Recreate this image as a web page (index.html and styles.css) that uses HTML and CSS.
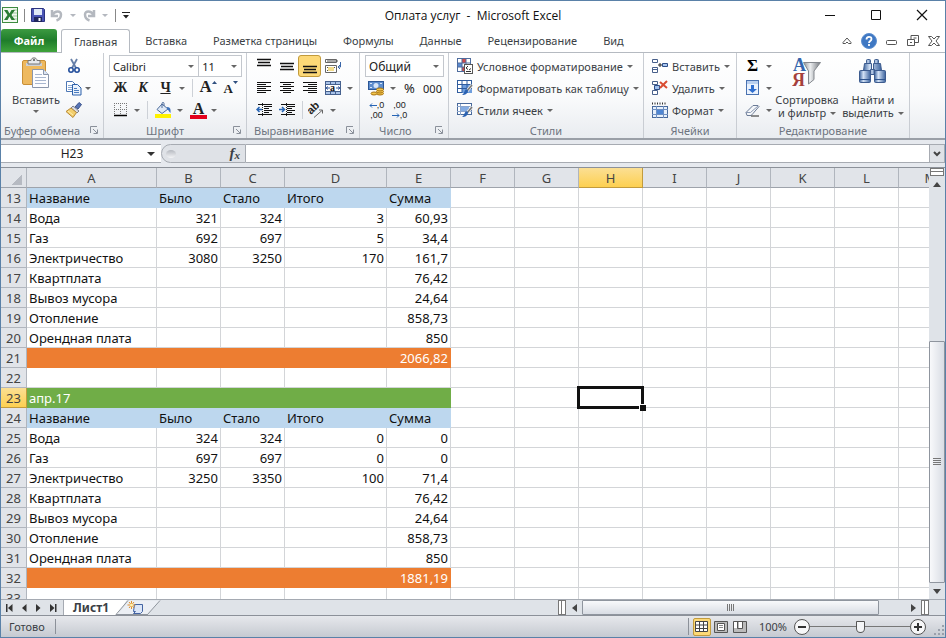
FILE: index.html
```html
<!DOCTYPE html>
<html lang="ru">
<head>
    <meta charset="UTF-8">
    <meta name="viewport" content="width=device-width, initial-scale=1.0">
    <title>Оплата услуг - Microsoft Excel</title>
    <link rel="stylesheet" href="styles.css">
</head>
<body>
<div class="window">
    <header class="titlebar">
        <div class="quick-access">
            <svg width="16" height="16" viewBox="0 0 16 16"><rect x=".5" y=".5" width="15" height="15" fill="#f2f8f0" stroke="#3d8b40"/><path d="M11 3h4M11 6h4M11 9h4M11 12h4" stroke="#9bc79a"/><path d="M2 3h3.500l2 3.500L9.500 3H13L9.500 8l3.500 5H9.500l-2-3.500L5.500 13H2l3.500-5z" fill="#2a7d34"/></svg>
            <span class="qa-line"></span>
            <button class="qa-button" aria-label="Сохранить"><svg width="14" height="14" viewBox="0 0 14 14"><path d="M.5.5h12l1 1v12H.5z" fill="#4a55b5" stroke="#2c3480"/><path d="M3 1h8v6H3z" fill="#dfe8f7"/><path d="M3 9h8v5H3z" fill="#20275e"/><path d="M7.500 10h2v3h-2z" fill="#fff"/></svg></button>
            <button class="qa-button" aria-label="Отменить"><svg width="14" height="14" viewBox="0 0 14 14"><path d="M2 2v6h6M2.500 7C5 2.500 11 2.500 11 6.500S8 12 6.500 12.500" fill="none" stroke="#b4b8bf" stroke-width="2.500"/></svg></button>
            <span class="arrow pale"></span>
            <button class="qa-button" aria-label="Вернуть"><svg width="14" height="14" viewBox="0 0 14 14"><path d="M12 2v6H6M11.500 7C9 2.500 3 2.500 3 6.500S6 12 7.500 12.500" fill="none" stroke="#b4b8bf" stroke-width="2.500"/></svg></button>
            <span class="arrow pale"></span>
            <span class="qa-line"></span>
            <button class="qa-more" aria-label="Настройка панели"><svg width="8" height="7" viewBox="0 0 8 7"><path d="M0 0h8v1H0zM1 3h6L4 6.500z" fill="#222"/></svg></button>
        </div>
        <h1 class="title">Оплата услуг&nbsp; -&nbsp; Microsoft Excel</h1>
        <div class="window-buttons">
            <button aria-label="Свернуть"><svg width="12" height="12" viewBox="0 0 12 12"><path d="M1 6.500h10" stroke="#111"/></svg></button>
            <button aria-label="Развернуть"><svg width="12" height="12" viewBox="0 0 12 12"><path d="M1.500 1.500h9v9h-9z" fill="none" stroke="#111"/></svg></button>
            <button aria-label="Закрыть"><svg width="12" height="12" viewBox="0 0 12 12"><path d="M1 1l10 10M11 1L1 11" stroke="#111" stroke-width="1.200"/></svg></button>
        </div>
    </header>

    <nav class="tabs">
        <button class="tab file">Файл</button>
        <button class="tab active">Главная</button>
        <button class="tab">Вставка</button>
        <button class="tab">Разметка страницы</button>
        <button class="tab">Формулы</button>
        <button class="tab">Данные</button>
        <button class="tab">Рецензирование</button>
        <button class="tab">Вид</button>
        <div class="tab-tools">
            <button aria-label="Свернуть ленту"><svg width="10" height="8" viewBox="0 0 10 8"><path d="M1 5.500L5 1l4 4.500v1H6.500L5 5 3.500 6.500H1z" fill="#fff" stroke="#555"/></svg></button>
            <button aria-label="Справка"><svg width="16" height="16" viewBox="0 0 16 16"><circle cx="8" cy="8" r="7.500" fill="#3f78c3" stroke="#5d8fd0"/><path d="M5.500 6.500C5.500 3 10.500 3 10.500 6c0 2-2.500 2-2.500 4M8 11v2" stroke="#fff" stroke-width="1.800" fill="none"/></svg></button>
            <button aria-label="Свернуть книгу"><svg width="12" height="12" viewBox="0 0 12 12"><rect x=".5" y="5.500" width="10" height="4" rx="1" fill="#fff" stroke="#555"/></svg></button>
            <button aria-label="Восстановить книгу"><svg width="12" height="12" viewBox="0 0 12 12"><path d="M4 4V.5h7.500v7H8" fill="none" stroke="#555"/><path d="M.500 4.500h7v6h-7z" fill="#fff" stroke="#555"/><path d="M3 7.500h2M6.500 3h3" stroke="#555"/></svg></button>
            <button aria-label="Закрыть книгу"><svg width="12" height="12" viewBox="0 0 12 12"><path d="M.5 1.500h3L6 4l2.500-2.500h3L8 6l3.500 4.500h-3L6 8l-2.500 2.500h-3L4 6z" fill="#fff" stroke="#555"/></svg></button>
        </div>
    </nav>

    <section class="ribbon">
        <div class="group clipboard">
            <div class="group-body side">
                <button class="big">
                    <svg width="28" height="32" viewBox="0 0 28 32"><rect x=".5" y="3.500" width="23" height="24" rx="1.500" fill="#eeb95f" stroke="#c98f36"/><path d="M4 6h16v3H4z" fill="#cbd0d8"/><path d="M6 7V3.500h3C9 0 15 0 15 3.500h3V7z" fill="#e8eaee" stroke="#777"/><circle cx="12" cy="3" r="1" fill="#555"/><path d="M10.500 12.500h11l5 5v13h-16z" fill="#fdfdff" stroke="#8b96ab"/><path d="M21.500 12.500v5h5" fill="#dce5f3" stroke="#8b96ab"/><path d="M13 17.500h7M13 20.500h11M13 23.500h11M13 26.500h11" stroke="#a9b7cf"/></svg>
                    <span>Вставить</span>
                    <span class="arrow"></span>
                </button>
                <div class="stack">
                    <div class="row"><button class="tool" aria-label="Вырезать"><svg width="16" height="16" viewBox="0 0 16 16"><path d="M5 1l5 9M11 1L6 10" stroke="#667fa8" stroke-width="1.800"/><circle cx="5" cy="12" r="2.200" fill="none" stroke="#244f9c" stroke-width="1.600"/><circle cx="11" cy="12" r="2.200" fill="none" stroke="#244f9c" stroke-width="1.600"/></svg></button></div>
                    <div class="row"><button class="tool" aria-label="Копировать"><svg width="16" height="16" viewBox="0 0 16 16"><path d="M.5 1.500h6l3 3v7h-9z" fill="#fff" stroke="#4d77b5"/><path d="M2 5.500h4M2 7.500h4M2 9.500h4" stroke="#86a6d2"/><path d="M6.500 4.500h5l3.500 3.500v7H6.500z" fill="#eaf2fc" stroke="#2c60aa"/><path d="M8 8.500h3M8 10.500h5M8 12.500h5" stroke="#4b7cbf"/></svg></button><span class="arrow"></span></div>
                    <div class="row"><button class="tool" aria-label="Формат по образцу"><svg width="17" height="16" viewBox="0 0 17 16"><path d="M10 5l4-4.500 2.500 2L13 7z" fill="#5775b5" stroke="#39508a"/><path d="M8 4l6 5-2 2-6-5z" fill="#d8dbe3" stroke="#7c8190"/><path d="M6 6l5.500 4.500-3.500 5L1 9.500z" fill="#f3cf6e" stroke="#b98a35"/><path d="M3 9l5 4" stroke="#fff0b0"/></svg></button></div>
                </div>
            </div>
            <div class="group-label">Буфер обмена<button class="launcher" aria-label="Параметры буфера"><svg width="8" height="8" viewBox="0 0 8 8"><path d="M.5 7V.5H7M3 3l4 4M7.500 3.500v4h-4" fill="none" stroke="#8a909a"/></svg></button></div>
        </div>

        <div class="group font">
            <div class="group-body">
                <div class="row">
                    <span class="pick family"><select aria-label="Шрифт"><option>Calibri</option></select><span class="arrow"></span></span>
                    <span class="pick size"><select aria-label="Размер"><option>11</option></select><span class="arrow"></span></span>
                </div>
                <div class="row">
                    <button class="tool letter">Ж</button>
                    <button class="tool letter italic">К</button>
                    <button class="tool letter under">Ч</button>
                    <span class="arrow"></span>
                    <span class="divider"></span>
                    <button class="tool letter grow">A<svg width="5" height="3" viewBox="0 0 5 3"><path d="M0 3L2.500 0 5 3z" fill="#2f4f7f"/></svg></button>
                    <button class="tool letter shrink">A<svg width="5" height="3" viewBox="0 0 5 3"><path d="M0 0h5L2.500 3z" fill="#2f4f7f"/></svg></button>
                </div>
                <div class="row">
                    <button class="tool" aria-label="Границы"><svg width="14" height="14" viewBox="0 0 14 14"><path d="M.5 0v12M6.500 0v12M12.500 0v12M0 .5h13M0 6.500h13" stroke="#777" stroke-dasharray="1 1"/><path d="M0 12.500h13" stroke="#000" stroke-width="1.500"/></svg></button>
                    <span class="arrow"></span>
                    <span class="divider"></span>
                    <button class="tool" aria-label="Цвет заливки"><svg width="17" height="16" viewBox="0 0 17 16"><path d="M0 12h16v4H0z" fill="#fff200"/><path d="M7 2l6 5-6 4.500-5-4z" fill="#dfe9f6" stroke="#4d6c9b"/><path d="M7 6V1.500c0-1.500 2-1.500 2 0V4" fill="none" stroke="#4d6c9b"/><path d="M12 5c3 0 4 2 3.500 6-1.500-1-2-3-3-3.500z" fill="#3d73bd"/></svg></button>
                    <span class="arrow"></span>
                    <button class="tool letter color">A</button>
                    <span class="arrow"></span>
                </div>
            </div>
            <div class="group-label">Шрифт<button class="launcher" aria-label="Параметры шрифта"><svg width="8" height="8" viewBox="0 0 8 8"><path d="M.5 7V.5H7M3 3l4 4M7.500 3.500v4h-4" fill="none" stroke="#8a909a"/></svg></button></div>
        </div>

        <div class="group align">
            <div class="group-body">
                <div class="row">
                    <button class="tool" aria-label="По верхнему краю"><svg width="14" height="16" viewBox="0 0 14 16"><path d="M0 1.500h14M1 4.500h12M0 7.500h14" stroke="#111" stroke-width="1.300"/></svg></button>
                    <button class="tool" aria-label="По середине"><svg width="14" height="16" viewBox="0 0 14 16"><path d="M0 5.500h14M1 8.500h12M0 11.500h14" stroke="#111" stroke-width="1.300"/></svg></button>
                    <button class="tool pressed" aria-label="По нижнему краю"><svg width="14" height="16" viewBox="0 0 14 16"><path d="M0 8.500h14M1 11.500h12M0 14.500h14" stroke="#111" stroke-width="1.300"/></svg></button>
                    <button class="tool wide" aria-label="Перенос текста"><svg width="17" height="16" viewBox="0 0 17 16"><path d="M.5 1.500h11v3H.5zM.5 7.500h11v7H.5z" fill="#fff" stroke="#666"/><path d="M2 3h11M2 9.500h8M2 12.500h6" stroke="#555"/><path d="M3 9h6v4H3z" fill="#f4dd8c"/><path d="M15.500 4v5H13m2-2l-2 2 2 2" fill="none" stroke="#3a66a8"/></svg></button>
                </div>
                <div class="row">
                    <button class="tool" aria-label="По левому краю"><svg width="14" height="12" viewBox="0 0 14 12"><path d="M0 .5h14M0 2.500h9M0 4.500h14M0 6.500h9M0 8.500h14M0 10.500h9" stroke="#111"/></svg></button>
                    <button class="tool" aria-label="По центру"><svg width="14" height="12" viewBox="0 0 14 12"><path d="M0 .5h14M3 2.500h8M0 4.500h14M3 6.500h8M0 8.500h14M3 10.500h8" stroke="#111"/></svg></button>
                    <button class="tool" aria-label="По правому краю"><svg width="14" height="12" viewBox="0 0 14 12"><path d="M0 .5h14M5 2.500h9M0 4.500h14M5 6.500h9M0 8.500h14M5 10.500h9" stroke="#111"/></svg></button>
                    <button class="tool wide" aria-label="Объединить"><svg width="16" height="14" viewBox="0 0 16 14"><rect x=".5" y=".5" width="15" height="13" fill="#a9c3e8" stroke="#46618e"/><path d="M5.500 0v4M10.500 0v4M5.500 10v4M10.500 10v4M0 3.500h16M0 10.500h16" stroke="#46618e"/><path d="M1 4h14v6H1z" fill="#fff"/><path d="M1 7h4m6 0h4M3 5.500L1 7l2 1.500M13 5.500L15 7l-2 1.500" stroke="#345899" fill="none"/><text x="5" y="9.500" font-family="Liberation Serif" font-size="10" font-weight="700" fill="#111">a</text></svg></button>
                    <span class="arrow"></span>
                </div>
                <div class="row">
                    <button class="tool" aria-label="Уменьшить отступ"><svg width="16" height="14" viewBox="0 0 16 14"><path d="M2 1.500h14M8 3.500h8M8 5.500h5M8 7.500h8M8 9.500h5M2 11.500h14" stroke="#111"/><path d="M6.500 0v14" stroke="#222" stroke-dasharray="1 1"/><path d="M6 6.500H1m2.500-2.500L1 6.500 3.500 9" stroke="#2765b5" stroke-width="1.500" fill="none"/></svg></button>
                    <button class="tool" aria-label="Увеличить отступ"><svg width="16" height="14" viewBox="0 0 16 14"><path d="M2 1.500h14M8 3.500h8M8 5.500h5M8 7.500h8M8 9.500h5M2 11.500h14" stroke="#111"/><path d="M7.500 0v14" stroke="#222" stroke-dasharray="1 1"/><path d="M0 6.500h5M3 4l2.500 2.500L3 9" stroke="#2765b5" stroke-width="1.500" fill="none"/></svg></button>
                    <span class="divider"></span>
                    <button class="tool" aria-label="Ориентация"><svg width="17" height="16" viewBox="0 0 17 16"><text x="3" y="13" transform="rotate(-45 3 13)" font-family="Liberation Sans" font-size="11" font-weight="700" fill="#222">ab</text><path d="M6 15.500l8-7M11 8h3.500v3.500" stroke="#666" fill="none"/></svg></button>
                    <span class="arrow"></span>
                </div>
            </div>
            <div class="group-label">Выравнивание<button class="launcher" aria-label="Параметры выравнивания"><svg width="8" height="8" viewBox="0 0 8 8"><path d="M.5 7V.5H7M3 3l4 4M7.500 3.500v4h-4" fill="none" stroke="#8a909a"/></svg></button></div>
        </div>

        <div class="group number">
            <div class="group-body">
                <div class="row">
                    <span class="pick format"><select aria-label="Числовой формат"><option>Общий</option></select><span class="arrow"></span></span>
                </div>
                <div class="row">
                    <button class="tool" aria-label="Финансовый формат"><svg width="17" height="16" viewBox="0 0 17 16"><rect x=".5" y="1.500" width="15" height="8" fill="#5d8dcd" stroke="#2c5796"/><circle cx="8" cy="5.500" r="2.500" fill="#d7e6f8"/><path d="M2 3.500h2M12 3.500h2M2 7.500h2" stroke="#d7e6f8"/><g fill="#f3c64c" stroke="#a87412"><ellipse cx="12" cy="13.500" rx="3.500" ry="1.500"/><ellipse cx="12" cy="11.500" rx="3.500" ry="1.500"/><ellipse cx="12" cy="9.500" rx="3.500" ry="1.500"/><ellipse cx="6" cy="13.500" rx="3" ry="1.500"/></g></svg></button>
                    <span class="arrow"></span>
                    <button class="tool text">%</button>
                    <button class="tool text thousands">000</button>
                </div>
                <div class="row">
                    <button class="tool digits" aria-label="Увеличить разрядность"><span><svg width="8" height="5" viewBox="0 0 8 5"><path d="M8 2.500H1M3 .5l-2 2 2 2" stroke="#2765b5" fill="none"/></svg>,0</span><span>,00</span></button>
                    <button class="tool digits" aria-label="Уменьшить разрядность"><span>,00</span><span><svg width="8" height="5" viewBox="0 0 8 5"><path d="M0 2.500h7M5 .5l2 2-2 2" stroke="#2765b5" fill="none"/></svg>,0</span></button>
                </div>
            </div>
            <div class="group-label">Число<button class="launcher" aria-label="Параметры числа"><svg width="8" height="8" viewBox="0 0 8 8"><path d="M.5 7V.5H7M3 3l4 4M7.500 3.500v4h-4" fill="none" stroke="#8a909a"/></svg></button></div>
        </div>

        <div class="group styles">
            <div class="group-body">
                <div class="row"><button class="command"><svg width="16" height="16" viewBox="0 0 16 16"><rect x=".5" y=".5" width="13" height="13" fill="#fff" stroke="#4f6d9e"/><path d="M5 1h4v4H5z" fill="#cf4a4a"/><path d="M1 5h4v4H1z" fill="#5b8ad0"/><path d="M5 9h3v4H5z" fill="#cf4a4a"/><path d="M5 0v14M9 0v8M0 5h14M0 9h8" stroke="#4f6d9e"/><rect x="7.500" y="6.500" width="8" height="9" fill="#fff" stroke="#555"/><path d="M11 8L9 10l2 1.500M12 12l2-1.500M9 13.500h5" stroke="#333" fill="none"/></svg>Условное форматирование<span class="arrow"></span></button></div>
                <div class="row"><button class="command"><svg width="16" height="16" viewBox="0 0 16 16"><rect x=".5" y=".5" width="14" height="12" fill="#fff" stroke="#2f5c9e"/><path d="M5 4h10v9H5z" fill="#6f9edd"/><path d="M5 0v13M10 0v13M0 4.500h15M0 8.500h15" stroke="#2f5c9e"/><path d="M15 5l-5 6" stroke="#eee" stroke-width="3"/><path d="M15 5l-5 6" stroke="#777" stroke-width="1.500"/><path d="M11 10c0 4-3 5-6 5 2-1 2-4 4-6z" fill="#2a62b2"/></svg>Форматировать как таблицу<span class="arrow"></span></button></div>
                <div class="row"><button class="command"><svg width="16" height="16" viewBox="0 0 16 16"><rect x=".5" y="1.500" width="14" height="11" fill="#fff" stroke="#48699b"/><path d="M3 5h9v4H3z" fill="#83abe2"/><path d="M0 4.500h15M0 9.500h15M3.500 2v11" stroke="#8ba5cc"/><path d="M15 5l-5 6" stroke="#eee" stroke-width="3"/><path d="M15 5l-5 6" stroke="#777" stroke-width="1.500"/><path d="M11 10c0 4-3 5-6 5 2-1 2-4 4-6z" fill="#2a62b2"/></svg>Стили ячеек<span class="arrow"></span></button></div>
            </div>
            <div class="group-label">Стили</div>
        </div>

        <div class="group cells">
            <div class="group-body">
                <div class="row"><button class="command"><svg width="16" height="16" viewBox="0 0 16 16"><path d="M.5 1.500h5v3h-5zM.5 9.500h5v5h-5zM.5 11.500h5" fill="#fff" stroke="#48608b"/><path d="M10.500 5.500h5v3h-5z" fill="#a9c6ee" stroke="#2c4d88"/><path d="M6 7h4M8 5v4" stroke="#222"/></svg>Вставить<span class="arrow"></span></button></div>
                <div class="row"><button class="command"><svg width="16" height="16" viewBox="0 0 16 16"><path d="M.5 1.500h5v3h-5zM.5 10.500h5v4h-5z" fill="#fff" stroke="#48608b"/><path d="M2.500 5.500h5v4h-5z" fill="#9dbfec" stroke="#2c4d88"/><path d="M8 2l7 6M15 1L8 8" stroke="#d94c32" stroke-width="2"/></svg>Удалить<span class="arrow"></span></button></div>
                <div class="row"><button class="command"><svg width="16" height="16" viewBox="0 0 16 16"><path d="M0 1.500h15" stroke="#333" stroke-dasharray="1 1.500" stroke-width="2"/><rect x=".5" y="4.500" width="15" height="11" fill="#e7f0fb" stroke="#48699b"/><path d="M4.500 4v12M11.500 4v12M0 7.500h16M0 12.500h16" stroke="#6d8fc2"/><path d="M5 8h6v4H5z" fill="#4f86d3"/></svg>Формат<span class="arrow"></span></button></div>
            </div>
            <div class="group-label">Ячейки</div>
        </div>

        <div class="group editing">
            <div class="group-body side">
                <div class="stack">
                    <div class="row"><button class="tool sigma">Σ</button><span class="arrow"></span></div>
                    <div class="row"><button class="tool" aria-label="Заполнить"><svg width="14" height="16" viewBox="0 0 14 16"><rect x=".5" y=".5" width="12" height="14" fill="#eaf2fd" stroke="#4a72b0"/><path d="M1 1h11v3H1z" fill="#b9d0f0"/><path d="M5 5h3v4h3l-4.500 4L2 9h3z" fill="#2f6fd0"/></svg></button><span class="arrow"></span></div>
                    <div class="row"><button class="tool" aria-label="Очистить"><svg width="15" height="13" viewBox="0 0 15 13"><path d="M8 1.500h5l1 1L8 9.500 6 11.500H2L1 8.500z" fill="#f5f7fa" stroke="#6a7a96"/><path d="M1 8.500h4.500L13 2" fill="none" stroke="#8a98b2"/><path d="M6 12h8" stroke="#222"/></svg></button><span class="arrow"></span></div>
                </div>
                <button class="big">
                    <svg width="30" height="32" viewBox="0 0 30 32">
                        <defs><linearGradient id="steel"><stop offset="0" stop-color="#8d9196"/><stop offset=".4" stop-color="#eceef0"/><stop offset="1" stop-color="#74787e"/></linearGradient></defs>
                        <text x="1" y="14" font-family="Liberation Serif" font-size="18" font-weight="700" fill="#3565ad">А</text>
                        <text x="0" y="29" font-family="Liberation Serif" font-size="18" font-weight="700" fill="#a5403c">Я</text>
                        <path d="M11.500 5.500h17L22 14v8.500L16.500 27V14z" fill="url(#steel)" stroke="#84888e"/>
                    </svg>
                    <span>Сортировка</span>
                    <span>и фильтр<span class="arrow"></span></span>
                </button>
                <button class="big">
                    <svg width="30" height="32" viewBox="0 0 30 32">
                        <defs><linearGradient id="lens"><stop offset="0" stop-color="#3f669f"/><stop offset=".35" stop-color="#d3e2f6"/><stop offset="1" stop-color="#3b629d"/></linearGradient></defs>
                        <g fill="url(#lens)" stroke="#3d5c8f">
                            <rect x="8.500" y="2.500" width="4" height="4" rx="1"/>
                            <rect x="16.500" y="2.500" width="4" height="4" rx="1"/>
                            <path d="M6.500 6.500h7v7h-8zM15.500 6.500h7l1 7h-8z"/>
                            <path d="M12.500 12.500h4v5h-4z"/>
                            <rect x="1.500" y="13.500" width="11" height="12" rx="1"/>
                            <rect x="16.500" y="13.500" width="11" height="12" rx="1"/>
                        </g>
                        <path d="M2 22.500h10M17 22.500h10" stroke="#2f558f"/>
                    </svg>
                    <span>Найти и</span>
                    <span>выделить<span class="arrow"></span></span>
                </button>
            </div>
            <div class="group-label">Редактирование</div>
        </div>
    </section>

    <section class="formula-bar">
        <div class="name-box"><input type="text" value="H23" aria-label="Имя ячейки"><span class="arrow dark"></span></div>
        <div class="fx"><span class="fx-dot"></span><button>f<sub>x</sub></button></div>
        <input class="formula" type="text" aria-label="Строка формул">
        <button class="expand" aria-label="Развернуть"><svg width="8" height="6" viewBox="0 0 8 6"><path d="M1 1l3 3 3-3" fill="none" stroke="#444" stroke-width="2"/></svg></button>
    </section>

    <main class="workspace">
        <div class="sheet">
            <table class="cells-table">
                <colgroup>
                    <col class="col-head"><col class="col-a"><col class="col-std"><col class="col-std"><col class="col-d">
                    <col class="col-std"><col class="col-std"><col class="col-std"><col class="col-std"><col class="col-std">
                    <col class="col-std"><col class="col-std"><col class="col-std"><col class="col-std">
                </colgroup>
                <thead><tr id="letters"></tr></thead>
                <tbody id="rows"></tbody>
            </table>
        </div>
        <div class="vscroll">
            <span class="split-h"></span>
            <button class="scroll-button" aria-label="Вверх"><span class="tri up"></span></button>
            <div class="vtrack"><div class="vthumb"><span class="grip"></span></div></div>
            <button class="scroll-button" aria-label="Вниз"><span class="tri down"></span></button>
        </div>
    </main>

    <div class="sheet-bar">
        <div class="sheet-nav">
            <button aria-label="Первый лист"><svg width="7" height="8" viewBox="0 0 7 8"><path d="M0 0h1.500v8H0zM6.500 0v8L2 4z" fill="#333"/></svg></button>
            <button aria-label="Предыдущий лист"><svg width="5" height="8" viewBox="0 0 5 8"><path d="M4.500 0v8L0 4z" fill="#333"/></svg></button>
            <button aria-label="Следующий лист"><svg width="5" height="8" viewBox="0 0 5 8"><path d="M0 0v8l4.500-4z" fill="#333"/></svg></button>
            <button aria-label="Последний лист"><svg width="7" height="8" viewBox="0 0 7 8"><path d="M5 0h1.500v8H5zM0 0v8l4.500-4z" fill="#333"/></svg></button>
        </div>
        <button class="sheet-tab">Лист1</button>
        <button class="new-sheet" aria-label="Вставить лист"><svg width="48" height="16" viewBox="0 0 48 16"><path d="M0 0h12L2 14.500H0z" fill="#fff"/><path d="M.5 14.500h2L14 .5h31L32.500 14.500z" fill="#eceff4"/><path d="M1 14.500L13 .5M32.500 14.500L45 .5M1 14.500h32" fill="none" stroke="#8f959d"/><path d="M19.500 4.500h8v7l-2 2h-7l2-2h-2z" fill="#dce6f7" stroke="#4464a3"/><path d="M16.500 1v8M12.500 5h8M14 2l5 6M19 2l-5 6" stroke="#e0902a"/><circle cx="16.500" cy="5" r="1.500" fill="#fff3b0"/></svg></button>
        <span class="bar-space"></span>
        <div class="hscroll">
            <span class="split-v"></span>
            <button class="scroll-button" aria-label="Влево"><span class="tri left"></span></button>
            <div class="htrack"><div class="hthumb"><span class="grip"></span></div></div>
            <button class="scroll-button" aria-label="Вправо"><span class="tri right"></span></button>
            <span class="split-v"></span>
        </div>
    </div>

    <footer class="status">
        <span class="ready">Готово</span>
        <div class="views">
            <button class="view on" aria-label="Обычный"><svg width="14" height="12" viewBox="0 0 14 12"><path d="M.5.5h12v10H.5zM4.500 0v11M8.500 0v11M0 4h13M0 7.500h13" fill="#fff" stroke="#444"/></svg></button>
            <button class="view" aria-label="Разметка страницы"><svg width="14" height="12" viewBox="0 0 14 12"><path d="M.5.5h13v11H.5z" fill="#bbb" stroke="#555"/><path d="M3.500 2.500h7v7h-7z" fill="#fff" stroke="#555"/><path d="M5 4.500h4M5 6.500h4" stroke="#888"/></svg></button>
            <button class="view" aria-label="Страничный режим"><svg width="14" height="12" viewBox="0 0 14 12"><path d="M.5.5h13v11H.5z" fill="#bbb" stroke="#555"/><path d="M1 1h3v6H1zM6 1h3v6H6z" fill="#fff"/><path d="M4.500 0v7.500H9.500V0" fill="none" stroke="#555"/></svg></button>
        </div>
        <label class="percent" for="zoom">100%</label>
        <div class="zoom">
            <button class="round" aria-label="Уменьшить"><svg width="16" height="16" viewBox="0 0 16 16"><circle cx="8" cy="8" r="7.500" fill="#f7f7f8" stroke="#555"/><path d="M4 8h8" stroke="#333" stroke-width="2"/></svg></button>
            <input id="zoom" type="range" min="0" max="100" value="50">
            <button class="round" aria-label="Увеличить"><svg width="16" height="16" viewBox="0 0 16 16"><circle cx="8" cy="8" r="7.500" fill="#f7f7f8" stroke="#555"/><path d="M4 8h8M8 4v8" stroke="#333" stroke-width="2"/></svg></button>
        </div>
        <svg class="size-grip" width="12" height="12" viewBox="0 0 12 12"><path d="M9 1h2v2H9zM9 5h2v2H9zM5 5h2v2H5zM9 9h2v2H9zM5 9h2v2H5zM1 9h2v2H1z" fill="#9aa0ab"/></svg>
    </footer>
</div>
<script src="script.js"></script>
</body>
</html>
```
FILE: styles.css
```css
* {
    box-sizing: border-box;
}
body {
    margin: 0;
    font-family: "Noto Sans", "Open Sans", sans-serif;
    font-size: 11px;
    color: #3b3f45;
}
button, input, select {
    font: inherit;
    color: inherit;
    margin: 0;
    padding: 0;
    border: 0;
    background: none;
    border-radius: 0;
}
svg {
    display: block;
    flex: none;
}
.window {
    display: flex;
    flex-direction: column;
    height: 100vh;
    border: 1px solid #5a81a8;
    background: #fff;
    overflow: hidden;
}

/* small drop-down triangle */
.arrow {
    display: inline-block;
    flex: none;
    border: 3px solid transparent;
    border-top-color: #666;
    border-bottom: 0;
}
.arrow.pale {
    border-top-color: #b4b8bf;
}
.arrow.dark {
    border-width: 4px;
    border-bottom: 0;
    border-top-color: #333;
}

/* title bar */
.titlebar {
    display: grid;
    grid-template-columns: 1fr auto 1fr;
    align-items: center;
    height: 28px;
    flex: none;
}
.quick-access {
    display: flex;
    align-items: center;
    gap: 5px;
    padding-left: 1px;
}
.qa-line {
    width: 1px;
    height: 13px;
    margin: 0 1px;
    background: #888;
}
.qa-button + .arrow {
    margin: 0 1px;
}
.title {
    margin: 0;
    font-family: "Open Sans", "Noto Sans", sans-serif;
    font-size: 12px;
    font-weight: 400;
    color: #111;
}
.window-buttons {
    display: flex;
    justify-content: flex-end;
}
.window-buttons button {
    display: flex;
    align-items: center;
    justify-content: center;
    width: 46px;
    height: 28px;
}

/* tabs */
.tabs {
    display: flex;
    align-items: stretch;
    height: 24px;
    flex: none;
    border-bottom: 1px solid #b5bac1;
}
.tab {
    padding: 0 13px;
    line-height: 23px;
}
.tab.file {
    width: 56px;
    padding: 0;
    margin-right: 4px;
    border-radius: 3px 3px 0 0;
    background: linear-gradient(#3c9a41, #1f7d2b 50%, #3fa33b);
    color: #fff;
    font-weight: 700;
}
.tab.active {
    height: 24px;
    padding: 0 12px;
    margin-right: 2px;
    border: 1px solid #b5bac1;
    border-bottom: 0;
    border-radius: 3px 3px 0 0;
    background: #fff;
}
.tab-tools {
    display: flex;
    align-items: center;
    gap: 9px;
    margin-left: auto;
    padding-right: 5px;
}

/* ribbon */
.ribbon {
    display: flex;
    flex: none;
    height: 87px;
    background: linear-gradient(#fff, #fafbfc 50%, #e9ecf0);
    border-bottom: 2px solid #9a9fa7;
}
.group {
    display: flex;
    flex-direction: column;
    flex: none;
    border-right: 1px solid #c9cdd3;
}
.group-body {
    flex: 1;
    padding: 2px 4px 0 5px;
}
.group-body.side {
    display: flex;
}
.group-label {
    display: flex;
    align-items: center;
    justify-content: center;
    height: 16px;
    color: #6d747f;
}
.launcher {
    margin-left: auto;
    padding-right: 5px;
}
.clipboard { width: 103px; }
.font { width: 143px; }
.align { width: 113px; }
.number { width: 89px; }
.styles { width: 195px; }
.cells { width: 93px; }
.editing { width: 173px; }
.clipboard .group-label {
    padding-left: 3px;
}
.font .group-label {
    padding-left: 42px;
}
.align .group-label {
    padding-left: 7px;
}
.number .group-label {
    padding-left: 19px;
}
.row {
    display: flex;
    align-items: center;
    height: 22px;
}
.row > .arrow {
    margin: 0 2px;
}
.tool {
    display: flex;
    align-items: center;
    justify-content: center;
    width: 23px;
    height: 22px;
    color: #222;
}
.tool.wide {
    width: 24px;
}
.tool.pressed {
    border: 1px solid #c29b3c;
    border-radius: 3px;
    background: #fdd977;
}
.letter {
    font-family: "Liberation Serif", serif;
    font-size: 14px;
    font-weight: 700;
}
.letter.italic {
    font-style: italic;
}
.letter.under {
    text-decoration: underline;
}
.letter.grow, .letter.shrink {
    align-items: flex-start;
}
.letter.grow {
    font-size: 17px;
}
.letter.shrink {
    font-size: 13px;
    line-height: 24px;
}
.letter.grow svg, .letter.shrink svg {
    margin-top: 4px;
}
.letter.color {
    width: 17px;
    height: 17px;
    margin-left: 5px;
    margin-right: 2px;
    border-bottom: 4px solid #e3001b;
    font-size: 16px;
    line-height: 13px;
}
.divider {
    width: 1px;
    height: 18px;
    margin: 0 4px 0 5px;
    background: #cdd1d7;
}
.align .divider {
    margin: 0 2px 0 4px;
}
.pick {
    position: relative;
    display: flex;
    height: 22px;
    border: 1px solid #c3c7cd;
    background: #fff;
}
.pick select {
    appearance: none;
    width: 100%;
    padding-left: 3px;
    color: #222;
}
.pick .arrow {
    position: absolute;
    right: 4px;
    top: 9px;
    pointer-events: none;
}
.pick.family {
    width: 91px;
}
.pick.size {
    width: 43px;
    border-left: 0;
}
.pick.format {
    width: 80px;
}
.pick.format select {
    font-size: 12px;
}
.text {
    font-size: 13px;
}
.text.thousands {
    font-size: 11px;
}
.digits {
    flex-direction: column;
    font-family: "Liberation Sans", sans-serif;
    font-size: 9px;
    line-height: 10px;
}
.digits span {
    display: flex;
    align-items: center;
}
.sigma {
    font-family: "Liberation Serif", serif;
    font-size: 17px;
    font-weight: 700;
    color: #000;
}
.command {
    display: flex;
    align-items: center;
    gap: 4px;
    height: 22px;
    padding-left: 3px;
    white-space: nowrap;
}
.big {
    display: flex;
    flex-direction: column;
    align-items: center;
    min-width: 66px;
    padding-top: 2px;
    line-height: 13px;
    white-space: nowrap;
}
.big svg {
    height: 32px;
    margin-bottom: 4px;
}
.big .arrow {
    margin: 0 0 2px 4px;
}
.big > .arrow {
    margin: 4px 0 0;
}
.clipboard .big {
    min-width: 56px;
}
.clipboard .group-body {
    padding-left: 7px;
}
.clipboard .tool {
    width: 19px;
}
.editing .group-body {
    padding-left: 4px;
    padding-right: 0;
}

/* formula bar */
.formula-bar {
    display: flex;
    flex: none;
    height: 28px;
    padding: 4px 0 4px;
    background: #e6e9ee;
    border-bottom: 1px solid #8c9199;
}
.name-box {
    display: flex;
    align-items: center;
    width: 160px;
    padding-right: 6px;
    background: #fff;
    border-top: 1px solid #a7abb2;
    border-bottom: 1px solid #a7abb2;
    font-size: 12px;
    color: #222;
}
.name-box input {
    flex: 1;
    min-width: 0;
    padding-right: 4px;
    text-align: center;
}
.fx {
    display: flex;
    align-items: center;
    justify-content: space-between;
    width: 85px;
    padding: 0 5px 0 4px;
    border: 1px solid #a7abb2;
    border-radius: 10px 0 0 10px;
    background: #dfe2e7;
}
.fx-dot {
    width: 10px;
    height: 8px;
    border-radius: 50%;
    background: linear-gradient(#b5b9c0, #f4f5f7);
}
.fx button {
    font-family: "Liberation Serif", serif;
    font-size: 15px;
    font-style: italic;
    font-weight: 700;
    line-height: 16px;
}
.fx sub {
    font-size: 11px;
    vertical-align: -1px;
}
.formula {
    flex: 1;
    min-width: 0;
    background: #fff;
    border-top: 1px solid #a7abb2;
    border-bottom: 1px solid #a7abb2;
}
.expand {
    display: flex;
    align-items: center;
    justify-content: center;
    width: 16px;
    border: 1px solid #a7abb2;
    background: #dfe2e7;
}

/* sheet */
.workspace {
    display: flex;
    flex: 1;
    min-height: 0;
}
.sheet {
    flex: 1;
    min-width: 0;
    overflow: hidden;
}
.cells-table {
    table-layout: fixed;
    width: 0;
    border-collapse: separate;
    border-spacing: 0;
    font-size: 13px;
    color: #111;
}
.col-head { width: 26px; }
.col-a { width: 130px; }
.col-d { width: 102px; }
.col-std { width: 64px; }
.cells-table th, .cells-table td {
    height: 20px;
    padding: 1px 2px 0;
    border-right: 1px solid #d3d5d8;
    border-bottom: 1px solid #d3d5d8;
    line-height: 18px;
    white-space: nowrap;
}
.cells-table th {
    padding: 1px 0 0;
    background: #e1e4e9;
    border-color: #b0b5bd;
    font-weight: 400;
    color: #444;
}
.cells-table thead th {
    border-bottom-color: #9ea3ab;
}
.cells-table .current {
    background: linear-gradient(#fbdf93, #fdd051);
    border-color: #c29b3c;
}
.corner::after {
    content: "";
    display: block;
    width: 11px;
    height: 11px;
    margin: 2px 0 0 10px;
    background: linear-gradient(135deg, transparent 50%, #b6bac2 50%);
}
.cells-table td.num {
    text-align: right;
}
.cells-table .head td.filled {
    background: #bdd7ee;
    border-color: #bdd7ee;
}
.cells-table .total td.filled {
    background: #ed7d31;
    border-color: #ed7d31;
    color: #fff;
}
.cells-table .month td.filled {
    background: #70ad47;
    border-color: #70ad47;
    color: #fff;
}
.cells-table td.selected {
    position: relative;
}
.selected::before {
    content: "";
    position: absolute;
    inset: -2px;
    border: 3px solid #111;
}
.selected::after {
    content: "";
    position: absolute;
    right: -4px;
    bottom: -4px;
    width: 6px;
    height: 6px;
    background: #111;
    border: solid #fff;
    border-width: 1px 0 0 1px;
}

/* scroll bars */
.vscroll {
    display: flex;
    flex-direction: column;
    width: 16px;
    background: #dfe3e8;
}
.split-h {
    height: 8px;
    flex: none;
    margin: 0 1px;
    border: 1px solid #777;
    background: linear-gradient(#fff 2px, #777 2px, #777 3px, #fff 3px);
}
.scroll-button {
    display: flex;
    align-items: center;
    justify-content: center;
    width: 16px;
    height: 16px;
    flex: none;
}
.tri {
    border: 4px solid transparent;
}
.tri.up {
    border-top: 0;
    border-bottom: 5px solid #444;
}
.tri.down {
    border-bottom: 0;
    border-top: 5px solid #444;
}
.tri.left {
    border-left: 0;
    border-right: 5px solid #444;
}
.tri.right {
    border-right: 0;
    border-left: 5px solid #444;
}
.vtrack {
    display: flex;
    flex-direction: column;
    justify-content: flex-end;
    flex: 1;
}
.vthumb, .hthumb {
    display: flex;
    align-items: center;
    justify-content: center;
    border: 1px solid #8f959e;
    border-radius: 1px;
}
.vthumb {
    height: 62%;
    background: linear-gradient(90deg, #f8f9fb, #d9dde4);
}
.vthumb .grip {
    width: 8px;
    height: 7px;
    background: repeating-linear-gradient(#777 0 1px, transparent 1px 2px);
}
.sheet-bar {
    display: flex;
    flex: none;
    height: 17px;
    background: #dfe3e8;
    border-top: 1px solid #a5aab2;
    border-bottom: 1px solid #8c9199;
}
.sheet-nav {
    display: flex;
    justify-content: space-between;
    align-items: center;
    width: 63px;
    padding: 0 6px 0 5px;
    border-right: 1px solid #a5aab2;
}
.sheet-tab {
    padding: 0 0 0 9px;
    width: 51px;
    background: #fff;
    text-align: left;
    font-size: 12px;
    font-weight: 700;
    line-height: 15px;
    white-space: nowrap;
}
.bar-space {
    flex: 1;
}
.hscroll {
    display: flex;
    flex: 0 1 387px;
    padding-right: 16px;
}
.htrack {
    flex: 1;
    display: flex;
}
.hthumb {
    width: 92%;
    background: linear-gradient(#f8f9fb, #d9dde4);
}
.hthumb .grip {
    width: 8px;
    height: 7px;
    background: repeating-linear-gradient(90deg, #777 0 1px, transparent 1px 2px);
}
.split-v {
    width: 8px;
    border: 1px solid #777;
    background: linear-gradient(90deg, #fff 2px, #777 2px, #777 3px, #fff 3px);
}

/* status bar */
.status {
    display: flex;
    align-items: center;
    flex: none;
    height: 21px;
    background: linear-gradient(#e6e8ec, #c6cad1);
}
.ready {
    width: 55px;
    padding-left: 8px;
    border-right: 1px solid #8c9199;
}
.views {
    display: flex;
    align-items: center;
    gap: 1px;
    height: 17px;
    margin-left: auto;
    padding-left: 4px;
    border-left: 1px solid #8c9199;
}
.view {
    display: flex;
    align-items: center;
    justify-content: center;
    width: 18px;
    height: 18px;
}
.view.on {
    border: 1px solid #c29b3c;
    border-radius: 2px;
    background: #fdd977;
}
.percent {
    padding: 0 7px 0 10px;
}
.zoom {
    display: flex;
    align-items: center;
}
.zoom input {
    appearance: none;
    width: 100px;
    height: 16px;
    background: linear-gradient(#777, #777) center / 100% 1px no-repeat;
}
.zoom input::-webkit-slider-thumb {
    appearance: none;
    width: 9px;
    height: 12px;
    border: 1px solid #555;
    border-radius: 1px 1px 5px 5px;
    background: #f4f5f7;
}
.size-grip {
    margin: 6px 0 0 7px;
}
```
FILE: script.js
```js
const letters = ["A", "B", "C", "D", "E", "F", "G", "H", "I", "J", "K", "L", "M"];
const selected = { col: 7, row: 23 };

// type: head / month / total paint columns A-E, the others are plain rows
const rows = [
    { n: 13, type: "head", cells: ["Название", "Было", "Стало", "Итого", "Сумма"] },
    { n: 14, cells: ["Вода", "321", "324", "3", "60,93"] },
    { n: 15, cells: ["Газ", "692", "697", "5", "34,4"] },
    { n: 16, cells: ["Электричество", "3080", "3250", "170", "161,7"] },
    { n: 17, cells: ["Квартплата", "", "", "", "76,42"] },
    { n: 18, cells: ["Вывоз мусора", "", "", "", "24,64"] },
    { n: 19, cells: ["Отопление", "", "", "", "858,73"] },
    { n: 20, cells: ["Орендная плата", "", "", "", "850"] },
    { n: 21, type: "total", cells: ["", "", "", "", "2066,82"] },
    { n: 22, cells: [] },
    { n: 23, type: "month", cells: ["апр.17"] },
    { n: 24, type: "head", cells: ["Название", "Было", "Стало", "Итого", "Сумма"] },
    { n: 25, cells: ["Вода", "324", "324", "0", "0"] },
    { n: 26, cells: ["Газ", "697", "697", "0", "0"] },
    { n: 27, cells: ["Электричество", "3250", "3350", "100", "71,4"] },
    { n: 28, cells: ["Квартплата", "", "", "", "76,42"] },
    { n: 29, cells: ["Вывоз мусора", "", "", "", "24,64"] },
    { n: 30, cells: ["Отопление", "", "", "", "858,73"] },
    { n: 31, cells: ["Орендная плата", "", "", "", "850"] },
    { n: 32, type: "total", cells: ["", "", "", "", "1881,19"] },
    { n: 33, cells: [] }
];

const head = document.getElementById("letters");
head.innerHTML = '<th class="corner"></th>' + letters.map((letter, i) =>
    `<th class="${i === selected.col ? "current" : ""}">${letter}</th>`
).join("");

const body = document.getElementById("rows");
rows.forEach(row => {
    const tr = document.createElement("tr");
    tr.className = row.type || "plain";
    tr.innerHTML = `<th class="${row.n === selected.row ? "current" : ""}">${row.n}</th>`;

    letters.forEach((letter, i) => {
        const td = document.createElement("td");
        td.textContent = row.cells[i] || "";
        if (row.type && i < 5) {
            td.classList.add("filled");
        }
        if (/^[\d,]+$/.test(td.textContent)) {
            td.classList.add("num");
        }
        if (i === selected.col && row.n === selected.row) {
            td.classList.add("selected");
        }
        tr.appendChild(td);
    });
    body.appendChild(tr);
});
```
